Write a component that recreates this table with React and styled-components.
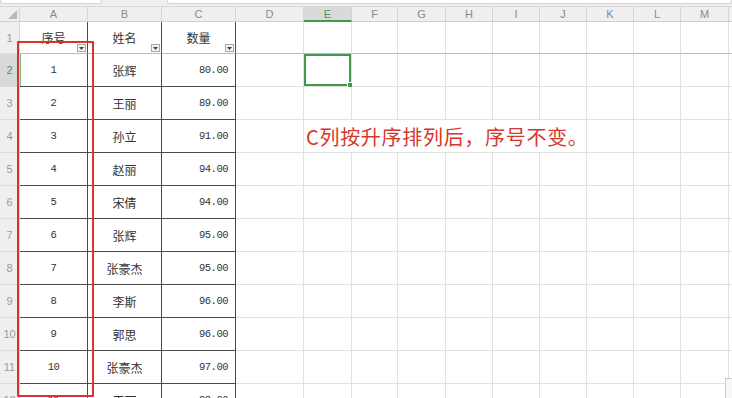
import React from 'react';
import styled, { createGlobalStyle } from 'styled-components';

const COLS = ['A', 'B', 'C', 'D', 'E', 'F', 'G', 'H', 'I', 'J', 'K', 'L', 'M', ''];
const WIDTHS = [20, 68, 74, 74, 68, 48, 46, 48, 47, 47, 47, 47, 47, 48, 20];

const HEADERS = ['序号', '姓名', '数量'];

const DATA = [
  [1, '张辉', '80.00'],
  [2, '王丽', '89.00'],
  [3, '孙立', '91.00'],
  [4, '赵丽', '94.00'],
  [5, '宋倩', '94.00'],
  [6, '张辉', '95.00'],
  [7, '张豪杰', '95.00'],
  [8, '李斯', '96.00'],
  [9, '郭思', '96.00'],
  [10, '张豪杰', '97.00'],
  [11, '王丽', '98.00'],
];

const GlobalStyle = createGlobalStyle`
  html, body {
    margin: 0;
    padding: 0;
    background: #ffffff;
    overflow: hidden;
  }
`;

const App = () => {
  const rows = [];

  // row 1 (headers)
  rows.push(
    <RowHead key="rh1">1</RowHead>,
    ...HEADERS.map((h) => (
      <Cell key={`h-${h}`} $table $frozen $align="center" $cjk>
        {h}
        <FilterBtn>
          <svg width="5" height="3" viewBox="0 0 5 3">
            <path d="M0 0h5L2.5 3z" fill="#444" />
          </svg>
        </FilterBtn>
      </Cell>
    )),
    ...COLS.slice(3).map((c) => <Cell key={`r1-${c}`} $frozen />)
  );

  DATA.forEach(([n, name, qty], i) => {
    const r = i + 2;
    rows.push(
      <RowHead key={`rh${r}`} $active={r === 2}>{r}</RowHead>,
      <Cell key={`a${r}`} $table $align="center" $mono $mark={r === 2}>{n}</Cell>,
      <Cell key={`b${r}`} $table $align="center" $cjk>{name}</Cell>,
      <Cell key={`c${r}`} $table $align="right" $mono>{qty}</Cell>,
      <Cell key={`d${r}`} />
    );
    if (r === 4) {
      rows.push(
        <Note key="note">C列按升序排列后，序号不变。</Note>,
        ...COLS.slice(10).map((c) => <Cell key={`r${r}-${c}`} />)
      );
    } else {
      rows.push(
        ...COLS.slice(4).map((c) => (
          <Cell key={`r${r}-${c}`} $selected={r === 2 && c === 'E'} />
        ))
      );
    }
  });

  return (
    <>
      <GlobalStyle />
      <Sheet>
        <TopBar>
          <BarField $w={100} />
          <BarField $w={565} $ml={65} />
        </TopBar>
        <Grid>
          <Corner>
            <svg width="9" height="9" viewBox="0 0 9 9">
              <path d="M9 0v9H0z" fill="#b9b9b9" />
            </svg>
          </Corner>
          {COLS.map((c, i) => (
            <ColHead key={`ch${i}`} $active={c === 'E'}>{c}</ColHead>
          ))}
          {rows}
        </Grid>
        <Highlight />
        <ScrollTab />
      </Sheet>
    </>
  );
};

const Sheet = styled.div`
  position: relative;
  width: 732px;
  height: 398px;
  overflow: hidden;
  background: #ffffff;
`;

const TopBar = styled.div`
  display: flex;
  height: 7px;
  background: #eeeeee;
  border-bottom: 1px solid #d8d8d8;
  box-sizing: border-box;
`;

const BarField = styled.div`
  width: ${(p) => p.$w}px;
  margin-left: ${(p) => p.$ml || 0}px;
  height: 3px;
  background: #ffffff;
  border: 1px solid #d5d5d5;
  border-top: none;
  border-radius: 0 0 3px 3px;
`;

const Grid = styled.div`
  display: grid;
  grid-template-columns: ${WIDTHS.map((w) => `${w}px`).join(' ')};
  grid-template-rows: 15px 32px repeat(11, 33px);
`;

const Corner = styled.div`
  background: #efefef;
  border-right: 1px solid #d4d4d4;
  border-bottom: 1px solid #cfcfcf;
  display: flex;
  align-items: flex-end;
  justify-content: flex-end;
  padding: 0 2px 2px 0;
  box-sizing: border-box;
`;

const ColHead = styled.div`
  background: ${(p) => (p.$active ? '#dadada' : '#efefef')};
  border-right: 1px solid #d4d4d4;
  border-bottom: ${(p) => (p.$active ? '2px solid #3f9a4c' : '1px solid #cfcfcf')};
  box-sizing: border-box;
  color: ${(p) => (p.$active ? '#5c8f62' : '#8a8a8a')};
  font: 11px 'Liberation Sans', Arial, sans-serif;
  display: flex;
  align-items: center;
  justify-content: center;
`;

const RowHead = styled.div`
  background: ${(p) => (p.$active ? '#d9d9d9' : '#efefef')};
  border-right: 1px solid #d4d4d4;
  border-bottom: 1px solid #dcdcdc;
  box-sizing: border-box;
  color: ${(p) => (p.$active ? '#4f9a5a' : '#9a9a9a')};
  font: 11px 'Liberation Sans', Arial, sans-serif;
  display: flex;
  align-items: center;
  justify-content: center;
`;

const Cell = styled.div`
  position: relative;
  box-sizing: border-box;
  border-right: 1px solid ${(p) => (p.$table ? '#4a4a4a' : '#e1e1e1')};
  border-bottom: 1px solid
    ${(p) => (p.$frozen ? '#9fcf9f' : p.$table ? '#4a4a4a' : '#e1e1e1')};
  box-shadow: ${(p) =>
    p.$selected ? 'inset 0 0 0 2px #3e9a4a' : p.$mark ? 'inset 1px 0 0 #7fbf86' : 'none'};
  display: flex;
  align-items: center;
  justify-content: ${(p) =>
    p.$align === 'right' ? 'flex-end' : p.$align === 'center' ? 'center' : 'flex-start'};
  padding: 0 7px 0 3px;
  color: #333333;
  font-size: ${(p) => (p.$cjk ? '12px' : '10.5px')};
  letter-spacing: ${(p) => (p.$mono ? '-0.5px' : '0')};
  font-family: ${(p) =>
    p.$mono
      ? "'Liberation Mono', 'Courier New', monospace"
      : "'Noto Sans CJK SC', sans-serif"};
  white-space: nowrap;

  ${(p) =>
    p.$align === 'center' && `padding: 0 3px;`}

  &::after {
    content: '';
    display: ${(p) => (p.$selected ? 'block' : 'none')};
    position: absolute;
    right: -2px;
    bottom: -2px;
    width: 4px;
    height: 4px;
    background: #3e9a4a;
    border: 1px solid #ffffff;
  }
`;

const FilterBtn = styled.span`
  position: absolute;
  right: 1px;
  bottom: 1px;
  width: 9px;
  height: 8px;
  box-sizing: border-box;
  border: 1px solid #a9a9a9;
  background: #f2f2f2;
  display: flex;
  align-items: center;
  justify-content: center;
`;

const Note = styled.div`
  grid-column: 6 / span 6;
  box-sizing: border-box;
  border-right: 1px solid #e1e1e1;
  border-bottom: 1px solid #e1e1e1;
  display: flex;
  align-items: center;
  padding-left: 2px;
  color: #d7372c;
  font: 20px 'Noto Sans CJK SC', 'Microsoft YaHei', sans-serif;
  letter-spacing: 0.7px;
  white-space: nowrap;
`;

const Highlight = styled.div`
  position: absolute;
  left: 17px;
  top: 41px;
  width: 77px;
  height: 356px;
  box-sizing: border-box;
  border: 2px solid #d8342c;
  border-radius: 1px;
  pointer-events: none;
`;

const ScrollTab = styled.div`
  position: absolute;
  left: 725px;
  top: 378px;
  width: 10px;
  height: 24px;
  box-sizing: border-box;
  border: 1px solid #cccccc;
  background: #f6f6f6;
`;

export default App;
